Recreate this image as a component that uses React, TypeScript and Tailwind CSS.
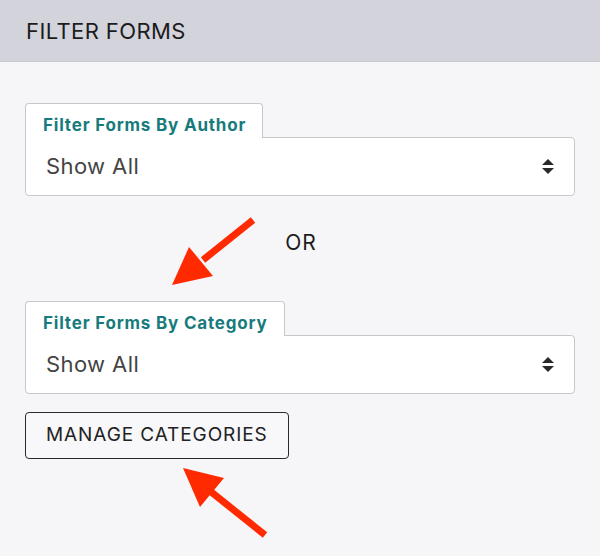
import React from "react";

function Chevrons() {
  return (
    <svg width="12" height="15" viewBox="0 0 12 15" className="shrink-0">
      <polygon points="6,0 12,6 0,6" fill="#2a2a2a" />
      <polygon points="0,9 12,9 6,15" fill="#2a2a2a" />
    </svg>
  );
}

function FilterSelect({ label }: { label: string }) {
  return (
    <div className="flex flex-col items-start">
      <div className="relative z-10 -mb-px h-[35px] rounded-t-[4px] border border-b-0 border-[#c8c8cc] bg-white pl-[17px] pr-[16px] pt-[11px] text-[17px] font-bold leading-[20px] tracking-[0.8px] text-[#177b7d]">
        {label}
      </div>
      <div className="flex h-[59px] w-full items-center justify-between rounded-b-[4px] rounded-tr-[4px] border border-[#c8c8cc] bg-white pl-[20px] pr-[20px]">
        <span className="text-[22px] tracking-[0.4px] text-[#444444]">Show All</span>
        <Chevrons />
      </div>
    </div>
  );
}

export default function App() {
  return (
    <div
      className="relative h-[556px] w-[600px] overflow-hidden bg-[#f6f6f8]"
      style={{ fontFamily: "Inter, 'Open Sans', Arial, sans-serif" }}
    >
      <div className="flex h-[62px] items-center border-b border-[#c9c9d1] bg-[#d3d3db] px-[26px] pt-[1px]">
        <h1 className="text-[22px] font-normal tracking-[0.4px] text-[#1c1c1c]">FILTER FORMS</h1>
      </div>
      <div className="flex flex-col px-[25px] pt-[41px]">
        <FilterSelect label="Filter Forms By Author" />
        <div className="flex h-[105px] items-start justify-center pt-[31px] pl-[2px] text-[21px] tracking-[1px] text-[#1c1c1c]">
          OR
        </div>
        <FilterSelect label="Filter Forms By Category" />
        <div className="mt-[18px] flex">
          <button className="h-[47px] rounded-[4px] border-[1.5px] border-[#2a2a2e] bg-[#f8f8fa] px-[20px] text-[19px] tracking-[0.9px] text-[#222222]">
            MANAGE CATEGORIES
          </button>
        </div>
      </div>
      <svg className="pointer-events-none absolute left-0 top-0" width="600" height="556" viewBox="0 0 600 556">
        <line x1="253" y1="220" x2="203" y2="260" stroke="#ff2a00" strokeWidth="7" strokeLinecap="butt" />
        <polygon points="172,285 189,247 213,276" fill="#ff2a00" />
        <line x1="265" y1="535" x2="210" y2="491" stroke="#ff2a00" strokeWidth="7" strokeLinecap="butt" />
        <polygon points="183,468 224,478 200,507" fill="#ff2a00" />
      </svg>
    </div>
  );
}
